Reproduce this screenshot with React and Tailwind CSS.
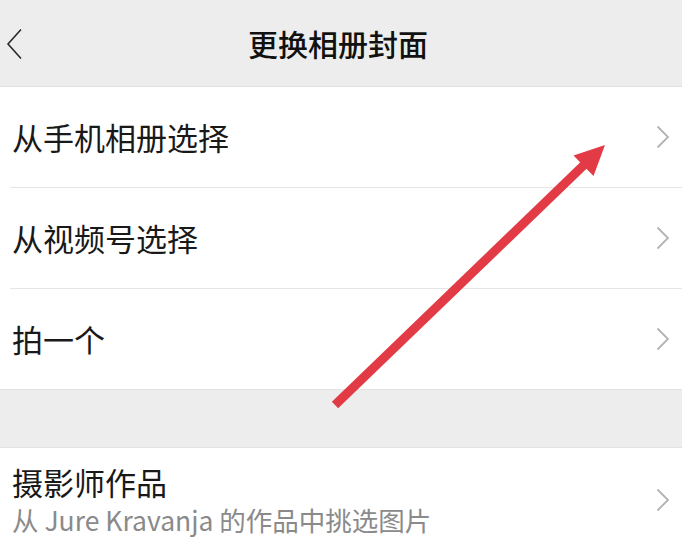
const font = { fontFamily: '"Noto Sans CJK SC", "Noto Sans", sans-serif' }

function Chevron() {
  return (
    <svg width="14" height="24" viewBox="0 0 14 24" className="shrink-0">
      <polyline points="1.5,1.5 12,12 1.5,22.5" fill="none" stroke="#b3b3b3" strokeWidth="1.8" />
    </svg>
  )
}

function Row({ title, divider }) {
  return (
    <div className="bg-white">
      <div className="flex items-center h-[100px] pl-3 pr-[12px]">
        <span className="flex-1 text-[31px] leading-[38px] text-[#191919]">{title}</span>
        <Chevron />
      </div>
      {divider && <div className="ml-[10px] h-px bg-[#e5e5e5]" />}
    </div>
  )
}

export default function App() {
  return (
    <div className="relative w-[682px] h-[547px] overflow-hidden bg-[#ededed]" style={font}>

      {/* Top bar */}
      <div className="relative flex items-center justify-center h-[87px] border-b border-[#e0e0e0]">
        <svg width="18" height="34" viewBox="0 0 18 34" className="absolute left-[6px] top-[28px]">
          <polyline points="15,1.5 2,16 15,30.5" fill="none" stroke="#2a2a2a" strokeWidth="1.6" />
        </svg>
        <span className="text-[30px] font-medium text-[#111] ml-[-6px]">更换相册封面</span>
      </div>

      {/* Options */}
      <div>
        <Row title="从手机相册选择" divider />
        <Row title="从视频号选择" divider />
        <Row title="拍一个" />
      </div>

      {/* Section gap */}
      <div className="h-[59px] border-t border-b border-[#e3e3e3]" />

      {/* Photographer row */}
      <div className="flex items-center bg-white pl-3 pr-[12px] pt-[14px] pb-[20px]">
        <div className="flex-1 flex flex-col">
          <span className="text-[31px] leading-[40px] text-[#191919]">摄影师作品</span>
          <span className="text-[26.5px] leading-[36px] text-[#8a8a8a]">从 Jure Kravanja 的作品中挑选图片</span>
        </div>
        <Chevron />
      </div>

      {/* Red annotation arrow */}
      <svg className="absolute inset-0 pointer-events-none" width="682" height="547" viewBox="0 0 682 547">
        <line x1="335" y1="405" x2="586" y2="163" stroke="#e33b46" strokeWidth="9" />
        <polygon points="605,145 573.5,155.5 593.5,176" fill="#e33b46" />
      </svg>
    </div>
  )
}
